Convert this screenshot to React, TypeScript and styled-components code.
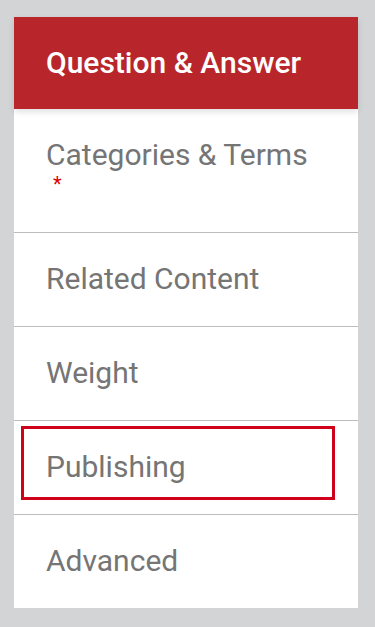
import React from 'react';
import styled, { createGlobalStyle } from 'styled-components';

const GlobalStyle = createGlobalStyle`
  html, body {
    margin: 0;
    padding: 0;
    background: #d3d4d6;
  }
  body {
    font-family: Roboto, 'Liberation Sans', sans-serif;
  }
`;

const Page = styled.div`
  padding: 17px 17px 20px 14px;
`;

const Panel = styled.nav`
  background: #ffffff;
  width: 344px;
`;

const Header = styled.h1`
  position: relative;
  margin: 0;
  padding: 28px 32px 29px;
  background: #b8262c;
  color: #ffffff;
  font-size: 30px;
  font-weight: 500;
  line-height: 35px;
  box-shadow: 0 3px 6px rgba(0, 0, 0, 0.12);
`;

const List = styled.ul`
  list-style: none;
  margin: 0;
  padding: 0;
`;

const Item = styled.li<{ $last?: boolean }>`
  padding: 0 7px;
  border-bottom: ${(p) => (p.$last ? 'none' : '1px solid #bdbdbd')};
`;

const Link = styled.a<{ $focused?: boolean }>`
  display: block;
  box-sizing: border-box;
  width: 314px;
  color: #757575;
  font-size: 30px;
  line-height: 35px;
  text-decoration: none;
  padding: ${(p) => (p.$focused ? '20px 22px 13px' : '28px 25px 30px')};
  margin: ${(p) => (p.$focused ? '5px 0 14px' : '0')};
  border: ${(p) => (p.$focused ? '3px solid #d0021b' : 'none')};
`;

const Required = styled.span`
  display: block;
  margin: 0 0 6px 7px;
  color: #e00000;
  font-size: 20px;
  line-height: 24px;
`;

const items = [
  { label: 'Categories & Terms', required: true },
  { label: 'Related Content' },
  { label: 'Weight' },
  { label: 'Publishing', focused: true },
  { label: 'Advanced' },
];

const App: React.FC = () => {
  return (
    <Page>
      <GlobalStyle />
      <Panel>
        <Header>Question &amp; Answer</Header>
        <List>
          {items.map((item, i) => (
            <Item key={item.label} $last={i === items.length - 1}>
              <Link href="#" $focused={item.focused}>
                {item.label}
                {item.required && <Required>*</Required>}
              </Link>
            </Item>
          ))}
        </List>
      </Panel>
    </Page>
  );
};

export default App;
